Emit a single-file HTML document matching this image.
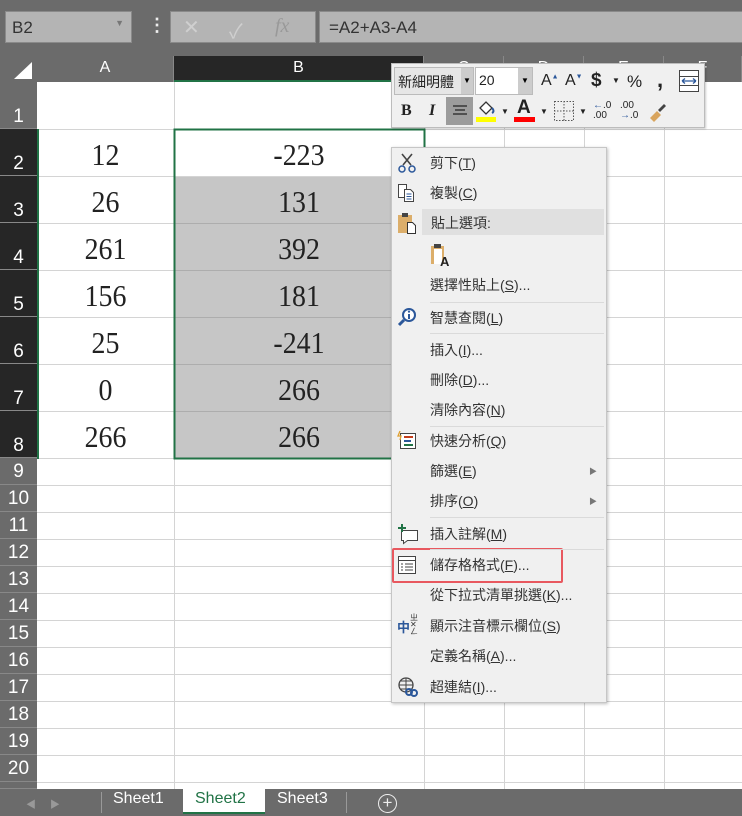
<!DOCTYPE html>
<html><head><meta charset="utf-8"><style>
*{margin:0;padding:0;box-sizing:border-box}
body{width:742px;height:816px;overflow:hidden;background:#6b6b6b;position:relative;font-family:"Liberation Sans","Noto Sans CJK TC",sans-serif}
.a{position:absolute}
.num{position:absolute;font-family:"Liberation Serif","Noto Serif CJK SC",serif;font-size:31px;color:#222;text-align:center;transform:scaleX(.9)}
.rh{position:absolute;left:0;width:37px;color:#fff;font-size:19px;text-align:center;border-bottom:1px solid #888}
.ch{position:absolute;top:56px;height:26px;color:#fff;font-size:16px;text-align:center;line-height:24px;border-right:1px solid #888}
.mi{position:absolute;left:430px;font-size:14px;color:#333;line-height:20px;white-space:nowrap}
.sep{position:absolute;left:430px;width:174px;height:1px;background:#dadada}
.ic{position:absolute;left:397px}
.tb{position:absolute;font-size:15px;color:#222}
</style></head><body>
<div class="a" style="left:5px;top:11px;width:127px;height:32px;background:#b4b4b4;border:1px solid #8a8a8a;font-size:17px;color:#333;padding:6px 0 0 6px">B2<span style="position:absolute;right:7px;top:6px;font-size:9px;color:#777">▼</span></div>
<div class="a" style="left:148px;top:15px;color:#eee;font-size:18px;font-weight:bold">⋮</div>
<div class="a" style="left:170px;top:11px;width:146px;height:32px;background:#b4b4b4;border:1px solid #8a8a8a;color:#cfcfcf;font-size:20px"><span class="a" style="left:12px;top:3px">✕</span><span class="a" style="left:58px;top:3px">✓</span><span class="a" style="left:104px;top:3px;font-family:'Liberation Serif',serif;font-style:italic;color:#999">fx</span></div>
<div class="a" style="left:319px;top:11px;width:430px;height:32px;background:#b4b4b4;border:1px solid #8a8a8a;font-size:17px;color:#333;padding:6px 0 0 9px">=A2+A3-A4</div>
<svg class="a" style="left:10px;top:60px" width="24" height="20"><polygon points="22,2 22,19 4,19" fill="#fff"/></svg>
<div class="ch" style="left:37px;width:137px">A</div>
<div class="ch" style="left:174px;width:250px;background:#262626;border-bottom:2px solid #217346">B</div>
<div class="ch" style="left:424px;width:80px">C</div>
<div class="ch" style="left:504px;width:80px">D</div>
<div class="ch" style="left:584px;width:80px">E</div>
<div class="ch" style="left:664px;width:78px">F</div>
<div class="a" style="left:37px;top:82px;width:705px;height:707px;background:#fff"></div>
<svg class="a" style="left:37px;top:82px" width="705" height="707">
<g stroke="#d4d4d4" stroke-width="1">
<line x1="137.5" y1="0" x2="137.5" y2="707"/><line x1="387.5" y1="0" x2="387.5" y2="707"/><line x1="467.5" y1="0" x2="467.5" y2="707"/><line x1="547.5" y1="0" x2="547.5" y2="707"/><line x1="627.5" y1="0" x2="627.5" y2="707"/>
<line x1="0" y1="47.5" x2="705" y2="47.5"/><line x1="0" y1="94.5" x2="705" y2="94.5"/><line x1="0" y1="141.5" x2="705" y2="141.5"/><line x1="0" y1="188.5" x2="705" y2="188.5"/><line x1="0" y1="235.5" x2="705" y2="235.5"/><line x1="0" y1="282.5" x2="705" y2="282.5"/><line x1="0" y1="329.5" x2="705" y2="329.5"/><line x1="0" y1="376.5" x2="705" y2="376.5"/>
<line x1="0" y1="403.5" x2="705" y2="403.5"/><line x1="0" y1="430.5" x2="705" y2="430.5"/><line x1="0" y1="457.5" x2="705" y2="457.5"/><line x1="0" y1="484.5" x2="705" y2="484.5"/><line x1="0" y1="511.5" x2="705" y2="511.5"/><line x1="0" y1="538.5" x2="705" y2="538.5"/><line x1="0" y1="565.5" x2="705" y2="565.5"/><line x1="0" y1="592.5" x2="705" y2="592.5"/><line x1="0" y1="619.5" x2="705" y2="619.5"/><line x1="0" y1="646.5" x2="705" y2="646.5"/><line x1="0" y1="673.5" x2="705" y2="673.5"/><line x1="0" y1="700.5" x2="705" y2="700.5"/>
</g>
<rect x="138" y="95" width="249" height="282" fill="#c6c6c6"/>
<g stroke="#adadad"><line x1="138" y1="141.5" x2="387" y2="141.5"/><line x1="138" y1="188.5" x2="387" y2="188.5"/><line x1="138" y1="235.5" x2="387" y2="235.5"/><line x1="138" y1="282.5" x2="387" y2="282.5"/><line x1="138" y1="329.5" x2="387" y2="329.5"/></g>
<rect x="137.5" y="47.5" width="250" height="329" fill="none" stroke="#217346" stroke-width="2"/>
<rect x="0" y="47" width="2" height="330" fill="#217346"/>
</svg>
<div class="rh" style="top:82px;height:47px;background:#6b6b6b;line-height:70px">1</div>
<div class="rh" style="top:129px;height:47px;background:#262626;line-height:70px">2</div>
<div class="rh" style="top:176px;height:47px;background:#262626;line-height:70px">3</div>
<div class="rh" style="top:223px;height:47px;background:#262626;line-height:70px">4</div>
<div class="rh" style="top:270px;height:47px;background:#262626;line-height:70px">5</div>
<div class="rh" style="top:317px;height:47px;background:#262626;line-height:70px">6</div>
<div class="rh" style="top:364px;height:47px;background:#262626;line-height:70px">7</div>
<div class="rh" style="top:411px;height:47px;background:#262626;line-height:70px">8</div>
<div class="rh" style="top:458px;height:27px;background:#6b6b6b;line-height:28px">9</div>
<div class="rh" style="top:485px;height:27px;background:#6b6b6b;line-height:28px">10</div>
<div class="rh" style="top:512px;height:27px;background:#6b6b6b;line-height:28px">11</div>
<div class="rh" style="top:539px;height:27px;background:#6b6b6b;line-height:28px">12</div>
<div class="rh" style="top:566px;height:27px;background:#6b6b6b;line-height:28px">13</div>
<div class="rh" style="top:593px;height:27px;background:#6b6b6b;line-height:28px">14</div>
<div class="rh" style="top:620px;height:27px;background:#6b6b6b;line-height:28px">15</div>
<div class="rh" style="top:647px;height:27px;background:#6b6b6b;line-height:28px">16</div>
<div class="rh" style="top:674px;height:27px;background:#6b6b6b;line-height:28px">17</div>
<div class="rh" style="top:701px;height:27px;background:#6b6b6b;line-height:28px">18</div>
<div class="rh" style="top:728px;height:27px;background:#6b6b6b;line-height:28px">19</div>
<div class="rh" style="top:755px;height:27px;background:#6b6b6b;line-height:28px">20</div>
<div class="rh" style="top:782px;height:7px;background:#6b6b6b"></div>
<div class="num" style="left:37px;width:137px;top:137px">12</div>
<div class="num" style="left:37px;width:137px;top:184px">26</div>
<div class="num" style="left:37px;width:137px;top:231px">261</div>
<div class="num" style="left:37px;width:137px;top:278px">156</div>
<div class="num" style="left:37px;width:137px;top:325px">25</div>
<div class="num" style="left:37px;width:137px;top:372px">0</div>
<div class="num" style="left:37px;width:137px;top:419px">266</div>
<div class="num" style="left:174px;width:250px;top:137px">-223</div>
<div class="num" style="left:174px;width:250px;top:184px">131</div>
<div class="num" style="left:174px;width:250px;top:231px">392</div>
<div class="num" style="left:174px;width:250px;top:278px">181</div>
<div class="num" style="left:174px;width:250px;top:325px">-241</div>
<div class="num" style="left:174px;width:250px;top:372px">266</div>
<div class="num" style="left:174px;width:250px;top:419px">266</div>

<!-- tab bar -->
<div class="a" style="left:0;top:789px;width:742px;height:27px;background:#6b6b6b"></div>
<div class="a" style="left:26px;top:796px;color:#999;font-size:10px">◀&nbsp;&nbsp;&nbsp;&nbsp;&nbsp;▶</div>
<div class="a" style="left:101px;top:792px;width:1px;height:21px;background:#999"></div>
<div class="a" style="left:113px;top:790px;color:#fff;font-size:16px">Sheet1</div>
<div class="a" style="left:183px;top:789px;width:82px;height:25px;background:#fff;border-bottom:2px solid #217346"></div>
<div class="a" style="left:195px;top:790px;color:#217346;font-size:16px">Sheet2</div>
<div class="a" style="left:277px;top:790px;color:#fff;font-size:16px">Sheet3</div>
<div class="a" style="left:346px;top:792px;width:1px;height:21px;background:#999"></div>
<div class="a" style="left:378px;top:794px;width:19px;height:19px;border:1.5px solid #eee;border-radius:50%;color:#eee;font-size:17px;line-height:15px;text-align:center">+</div>

<!-- mini toolbar -->
<div class="a" style="left:391px;top:63px;width:314px;height:65px;background:#f0f0f0;border:1px solid #bcbcbc;box-shadow:1px 1px 2px rgba(0,0,0,.2)"></div>
<div class="a" style="left:394px;top:67px;width:80px;height:28px;background:#e6e6e6;border:1px solid #bbb;font-size:14px;color:#222;padding:4px 0 0 3px">新細明體</div>
<div class="a" style="left:461px;top:68px;width:12px;height:26px;background:#ccc;font-size:8px;text-align:center;line-height:26px">▼</div>
<div class="a" style="left:475px;top:67px;width:58px;height:28px;background:#fff;border:1px solid #bbb;font-size:14px;color:#222;padding:4px 0 0 3px">20</div>
<div class="a" style="left:518px;top:68px;width:14px;height:26px;background:#ccc;font-size:8px;text-align:center;line-height:26px">▼</div>
<div class="tb" style="left:541px;top:72px;font-size:16px">A<sup style="font-size:7px;color:#2b579a">▲</sup></div>
<div class="tb" style="left:565px;top:72px;font-size:16px">A<sup style="font-size:7px;color:#2b579a">▼</sup></div>
<div class="tb" style="left:591px;top:70px;font-size:19px;font-weight:bold">$</div>
<div class="tb" style="left:612px;top:76px;font-size:8px">▼</div>
<div class="tb" style="left:627px;top:72px;font-size:17px">%</div>
<div class="tb" style="left:657px;top:67px;font-size:22px;font-weight:bold">,</div>
<svg class="a" style="left:678px;top:69px" width="22" height="24"><rect x="1.5" y="1.5" width="19" height="21" fill="#fff" stroke="#444"/><line x1="1.5" y1="7.5" x2="20.5" y2="7.5" stroke="#444"/><line x1="1.5" y1="16.5" x2="20.5" y2="16.5" stroke="#444"/><path d="M4 12h14M4 12l3-2.5M4 12l3 2.5M18 12l-3-2.5M18 12l-3 2.5" stroke="#2b579a" fill="none" stroke-width="1.3"/></svg>
<div class="tb" style="left:401px;top:102px;font-size:16px;font-weight:bold;font-family:'Liberation Serif',serif">B</div>
<div class="tb" style="left:429px;top:102px;font-size:16px;font-weight:bold;font-style:italic;font-family:'Liberation Serif',serif">I</div>
<div class="a" style="left:446px;top:97px;width:27px;height:28px;background:#9c9c9c"></div>
<svg class="a" style="left:451px;top:104px" width="18" height="14"><path d="M2 2h14M4 6h10M2 10h14" stroke="#222" stroke-width="1.2"/></svg>
<svg class="a" style="left:475px;top:98px" width="22" height="26"><path d="M5 10l6-6 6 6-6 6z" fill="#fff" stroke="#333" stroke-width="1.3"/><path d="M17 10c2 2 2 4 0 5" stroke="#2b579a" fill="none" stroke-width="2"/><rect x="1" y="19" width="20" height="5" fill="#ffff00"/></svg>
<div class="tb" style="left:501px;top:107px;font-size:8px">▼</div>
<div class="tb" style="left:517px;top:97px;font-size:19px;font-weight:bold">A</div>
<div class="a" style="left:514px;top:117px;width:21px;height:5px;background:#f00"></div>
<div class="tb" style="left:540px;top:107px;font-size:8px">▼</div>
<svg class="a" style="left:553px;top:100px" width="22" height="22"><rect x="1.5" y="1.5" width="19" height="19" fill="none" stroke="#555" stroke-dasharray="1.5 1.5"/><path d="M11 1v20M1 11h20" stroke="#555" stroke-dasharray="1.5 1.5"/></svg>
<div class="tb" style="left:579px;top:107px;font-size:8px">▼</div>
<div class="tb" style="left:593px;top:101px;font-size:10px;line-height:10px;color:#222"><span style="color:#2b579a">←</span>.0<br>.00</div>
<div class="tb" style="left:620px;top:101px;font-size:10px;line-height:10px;color:#222">.00<br><span style="color:#2b579a">→</span>.0</div>
<svg class="a" style="left:646px;top:100px" width="22" height="22"><path d="M4 18l7-7 4 4-7 7z" fill="#d9a55e"/><path d="M12 10l6-6 2 2-6 6" fill="#444"/></svg>

<!-- context menu -->
<div class="a" style="left:391px;top:147px;width:216px;height:556px;background:#f0f0f0;border:1px solid #c6c6c6;box-shadow:1px 1px 3px rgba(0,0,0,.25)"></div>
<div class="a" style="left:422px;top:209px;width:182px;height:26px;background:#e0e0e0"></div>
<div class="a" style="left:392px;top:548px;width:171px;height:35px;border:2px solid #e8585f;border-radius:2px"></div>
<div class="sep" style="top:302px"></div><div class="sep" style="top:333px"></div><div class="sep" style="top:426px"></div><div class="sep" style="top:517px"></div><div class="sep" style="top:549px"></div>
<div class="mi" style="top:153px">剪下(<u>T</u>)</div>
<div class="mi" style="top:183px">複製(<u>C</u>)</div>
<div class="mi" style="top:213px;left:431px">貼上選項:</div>
<div class="mi" style="top:275px">選擇性貼上(<u>S</u>)...</div>
<div class="mi" style="top:308px">智慧查閱(<u>L</u>)</div>
<div class="mi" style="top:340px">插入(<u>I</u>)...</div>
<div class="mi" style="top:370px">刪除(<u>D</u>)...</div>
<div class="mi" style="top:400px">清除內容(<u>N</u>)</div>
<div class="mi" style="top:431px">快速分析(<u>Q</u>)</div>
<div class="mi" style="top:461px">篩選(<u>E</u>)</div>
<div class="mi" style="top:491px">排序(<u>O</u>)</div>
<div class="mi" style="top:524px">插入註解(<u>M</u>)</div>
<div class="mi" style="top:555px">儲存格格式(<u>F</u>)...</div>
<div class="mi" style="top:585px">從下拉式清單挑選(<u>K</u>)...</div>
<div class="mi" style="top:616px">顯示注音標示欄位(<u>S</u>)</div>
<div class="mi" style="top:646px">定義名稱(<u>A</u>)...</div>
<div class="mi" style="top:677px">超連結(<u>I</u>)...</div>
<div class="a" style="left:589px;top:466px;font-size:8px;color:#777">▶</div>
<div class="a" style="left:589px;top:496px;font-size:8px;color:#777">▶</div>
<svg class="ic" style="top:152px" width="20" height="22"><path d="M5 2l9 11M15 2L6 13" stroke="#444" stroke-width="1.6"/><circle cx="5" cy="17" r="3" fill="none" stroke="#2b579a" stroke-width="1.5"/><circle cx="15" cy="17" r="3" fill="none" stroke="#2b579a" stroke-width="1.5"/></svg>
<svg class="ic" style="top:183px" width="20" height="20"><path d="M1.5 1.5h8v13h-8z" fill="#fff" stroke="#444"/><path d="M7.5 6.5h6l3 3v9h-9z" fill="#fff" stroke="#444"/><path d="M9.5 11h5M9.5 13.5h5M9.5 16h5" stroke="#2b579a"/></svg>
<svg class="ic" style="top:211px" width="22" height="24"><rect x="1" y="4" width="14" height="18" fill="#dcae6a"/><rect x="5" y="2" width="6" height="4" fill="#444"/><path d="M10.5 11.5h5l3 3v8h-8z" fill="#fff" stroke="#333"/></svg>
<svg class="a" style="left:430px;top:242px" width="24" height="26"><rect x="1" y="4" width="13" height="18" fill="#dcae6a"/><rect x="4" y="2" width="7" height="4" fill="#444"/><rect x="4" y="7" width="8" height="15" fill="#fff"/><text x="10" y="24" font-size="13" font-weight="bold" font-family="Liberation Sans" fill="#222">A</text></svg>
<svg class="ic" style="top:307px" width="20" height="20"><circle cx="12" cy="8" r="6" fill="#fff" stroke="#2b579a" stroke-width="2"/><path d="M7 13l-5 5" stroke="#2b579a" stroke-width="3"/><path d="M12 7v5" stroke="#2b579a" stroke-width="2"/><circle cx="12" cy="4.6" r="1.1" fill="#2b579a"/></svg>
<svg class="ic" style="top:430px" width="20" height="20"><rect x="3.5" y="3.5" width="15" height="15" fill="#fff" stroke="#444"/><path d="M7 7h9" stroke="#c43e1c" stroke-width="2"/><path d="M7 11h7" stroke="#2b579a" stroke-width="2"/><path d="M7 15h9" stroke="#217346" stroke-width="2"/><path d="M3 1l-2 5h3l-1 4" stroke="#e0a030" fill="none" stroke-width="1.3"/></svg>
<svg class="ic" style="top:523px" width="22" height="22"><path d="M4.5 7.5h16v10h-10l-4 3v-3h-2z" fill="#fff" stroke="#444"/><path d="M5 1v8M1 5h8" stroke="#217346" stroke-width="2"/></svg>
<svg class="ic" style="top:555px" width="20" height="20"><rect x="1.5" y="1.5" width="17" height="17" fill="#fff" stroke="#444"/><path d="M1.5 5.5h17" stroke="#444"/><path d="M4 9h2M8 9h8M4 12h2M8 12h8M4 15h2M8 15h8" stroke="#444"/></svg>
<div class="a" style="left:397px;top:617px;font-size:13px;color:#2b579a;font-weight:bold">中</div>
<div class="a" style="left:410px;top:614px;font-size:8px;color:#333;line-height:7px">ㄓ<br>✕<br>ㄥ</div>
<svg class="ic" style="top:676px" width="22" height="22"><circle cx="9" cy="9" r="7" fill="none" stroke="#444" stroke-width="1.3"/><path d="M2 9h14M9 2v14M4 5h10M4 13h10" stroke="#444"/><rect x="9" y="13" width="6" height="6" rx="3" fill="none" stroke="#2b579a" stroke-width="2"/><rect x="14" y="14" width="6" height="6" rx="3" fill="none" stroke="#2b579a" stroke-width="2"/></svg>
</body></html>
